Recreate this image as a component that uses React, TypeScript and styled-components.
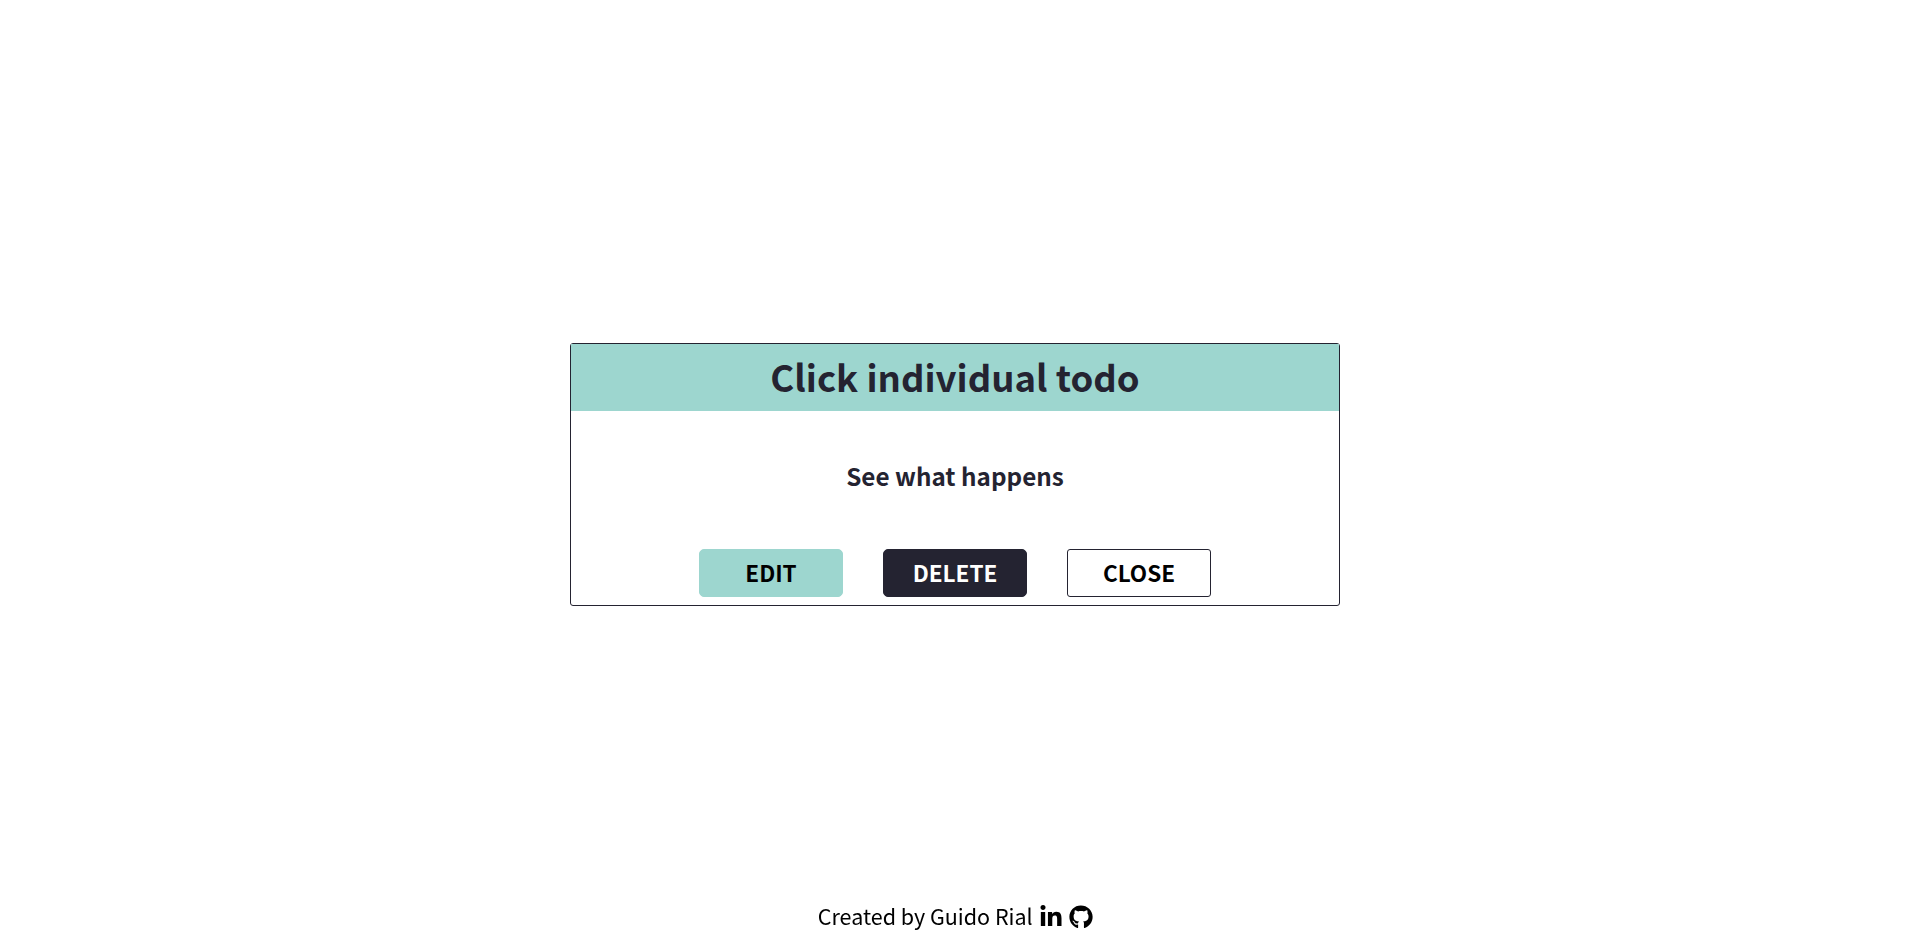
import React from "react";
import styled, { createGlobalStyle } from "styled-components";
import { FaGithub, FaLinkedinIn } from "react-icons/fa";

const GlobalStyle = createGlobalStyle`
  * { box-sizing: border-box; margin: 0; padding: 0; }
  body {
    background: #fff;
    font-family: "Noto Sans CJK JP", "Noto Sans", sans-serif;
    font-size: 21.5px;
    color: #000;
  }
`;

const Page = styled.div`
  display: flex;
  flex-direction: column;
  width: 1910px;
  height: 948px;
`;

const Main = styled.main`
  flex: 1;
  display: flex;
  flex-direction: column;
  align-items: center;
  padding-top: 343px;
`;

const Card = styled.article`
  display: flex;
  flex-direction: column;
  width: 770px;
  height: 263px;
  border: 1px solid #242331;
  border-radius: 3px;
  color: #242331;
`;

const Title = styled.h1`
  height: 67px;
  line-height: 65px;
  font-size: 36.5px;
  font-weight: 700;
  text-align: center;
  background: #9dd6cf;
`;

const Description = styled.p`
  flex: 1;
  padding-top: 45px;
  line-height: 40px;
  font-size: 24.25px;
  font-weight: 700;
  text-align: center;
`;

const Actions = styled.div`
  display: flex;
  justify-content: center;
  gap: 40px;
  padding-bottom: 8px;
`;

const Button = styled.button<{ $bg: string; $border: string; $color: string; $radius: number }>`
  width: 144px;
  height: 48px;
  padding-bottom: 3px;
  border: 1px solid ${(p) => p.$border};
  border-radius: ${(p) => p.$radius}px;
  background: ${(p) => p.$bg};
  color: ${(p) => p.$color};
  font-family: inherit;
  font-size: 22.5px;
  font-weight: 700;
  text-transform: uppercase;
`;

const Footer = styled.footer`
  display: flex;
  justify-content: center;
  align-items: center;
  height: 62px;
  padding-left: 1px;
  will-change: transform;
`;

const Credit = styled.span`
  padding-bottom: 4px;
  margin-right: 0.5px;
`;

const IconLink = styled.a`
  display: flex;
  margin-left: 6px;
  font-size: 24px;
  color: #000;
`;

export default function App() {
  return (
    <Page>
      <GlobalStyle />
      <Main>
        <Card>
          <Title>Click individual todo</Title>
          <Description>See what happens</Description>
          <Actions>
            <Button $bg="#9dd6cf" $border="#9dd6cf" $color="#000" $radius={5}>Edit</Button>
            <Button $bg="#242331" $border="#242331" $color="#fff" $radius={5}>Delete</Button>
            <Button $bg="#fff" $border="#242331" $color="#000" $radius={3}>Close</Button>
          </Actions>
        </Card>
      </Main>
      <Footer>
        <Credit>Created by Guido Rial</Credit>
        <IconLink aria-label="LinkedIn"><FaLinkedinIn /></IconLink>
        <IconLink aria-label="GitHub"><FaGithub /></IconLink>
      </Footer>
    </Page>
  );
}
